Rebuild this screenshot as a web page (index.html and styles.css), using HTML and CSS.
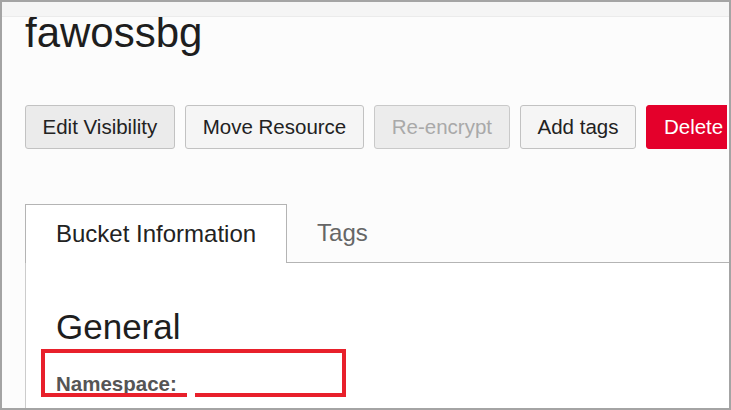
FILE: index.html
```html
<!DOCTYPE html>
<html lang="en">
<head>
<meta charset="utf-8">
<title>fawossbg</title>
<link rel="stylesheet" href="styles.css">
</head>
<body>
<div class="frame">
  <div class="topbar"></div>
  <main class="main">
    <h1 class="title">fawossbg</h1>
    <div class="actions">
      <button class="btn btn-focus">Edit Visibility</button>
      <button class="btn">Move Resource</button>
      <button class="btn btn-disabled" disabled>Re-encrypt</button>
      <button class="btn">Add tags</button>
      <button class="btn btn-danger">Delete</button>
    </div>
    <div class="tabs">
      <div class="tab tab-active">Bucket Information</div>
      <div class="tab">Tags</div>
    </div>
    <section class="panel">
      <h2 class="section-title">General</h2>
      <div class="field"><span class="label">Namespace:</span></div>
      <div class="highlight"></div>
      <div class="notch"></div>
    </section>
  </main>
</div>
</body>
</html>
```

FILE: styles.css
```css
* { box-sizing: border-box; }

html, body {
  margin: 0;
  padding: 0;
  width: 731px;
  height: 410px;
  overflow: hidden;
  background: #ffffff;
  font-family: "Liberation Sans", Arial, sans-serif;
}

.frame {
  width: 731px;
  height: 410px;
  border: 2px solid #a4a4a4;
  background: #fcfcfc;
  display: flex;
  flex-direction: column;
  overflow: hidden;
}

.topbar {
  flex: 0 0 15px;
  background: #f5f5f5;
  border-bottom: 1px solid #ebebeb;
}

.main {
  flex: 1;
  min-height: 0;
  overflow: hidden;
  padding-left: 23px;
  display: flex;
  flex-direction: column;
}

.title {
  margin: -5px 0 0 0;
  font-size: 42px;
  line-height: 42px;
  font-weight: normal;
  color: #1e1e1e;
}

.actions {
  margin-top: 51px;
  margin-right: 2px;
  display: flex;
  gap: 10.5px;
  overflow: hidden;
  flex: 0 0 44px;
}

.btn {
  flex: 0 0 auto;
  height: 44px;
  padding: 0 16.5px;
  border: 1px solid #c2c2c2;
  border-radius: 3px;
  background: #f5f5f5;
  color: #222222;
  font-family: "Liberation Sans", Arial, sans-serif;
  font-size: 20.5px;
  white-space: nowrap;
}

.btn-focus {
  background: #ebebeb;
}

.btn-disabled {
  background: #ececec;
  color: #a9a9a9;
  border-color: #c9c9c9;
}

.btn-danger {
  background: #e4002b;
  border-color: #e4002b;
  color: #ffffff;
}

.tabs {
  margin-top: 55px;
  display: flex;
  border-bottom: 1px solid #b4b4b4;
  flex: 0 0 59px;
}

.tab {
  height: 58px;
  padding: 0 30px;
  display: flex;
  align-items: center;
  font-size: 24px;
  color: #666666;
  white-space: nowrap;
}

.tab-active {
  height: 59px;
  margin-bottom: -1px;
  background: #ffffff;
  border: 1px solid #b4b4b4;
  border-bottom: none;
  color: #222222;
}

.panel {
  position: relative;
  flex: 1;
  background: #ffffff;
  border-left: 1px solid #cccccc;
  padding-left: 30px;
  padding-top: 46px;
}

.section-title {
  margin: 0;
  font-size: 35px;
  line-height: 35px;
  font-weight: normal;
  color: #1e1e1e;
}

.field {
  margin-top: 30px;
  font-size: 20.5px;
  line-height: 20px;
}

.label {
  font-weight: bold;
  color: #555555;
}

.highlight {
  position: absolute;
  left: 15px;
  top: 86px;
  width: 305px;
  height: 48px;
  border: 4px solid #e8202b;
}

.notch {
  position: absolute;
  left: 161px;
  top: 129px;
  width: 8px;
  height: 5px;
  background: #ffffff;
}
```
